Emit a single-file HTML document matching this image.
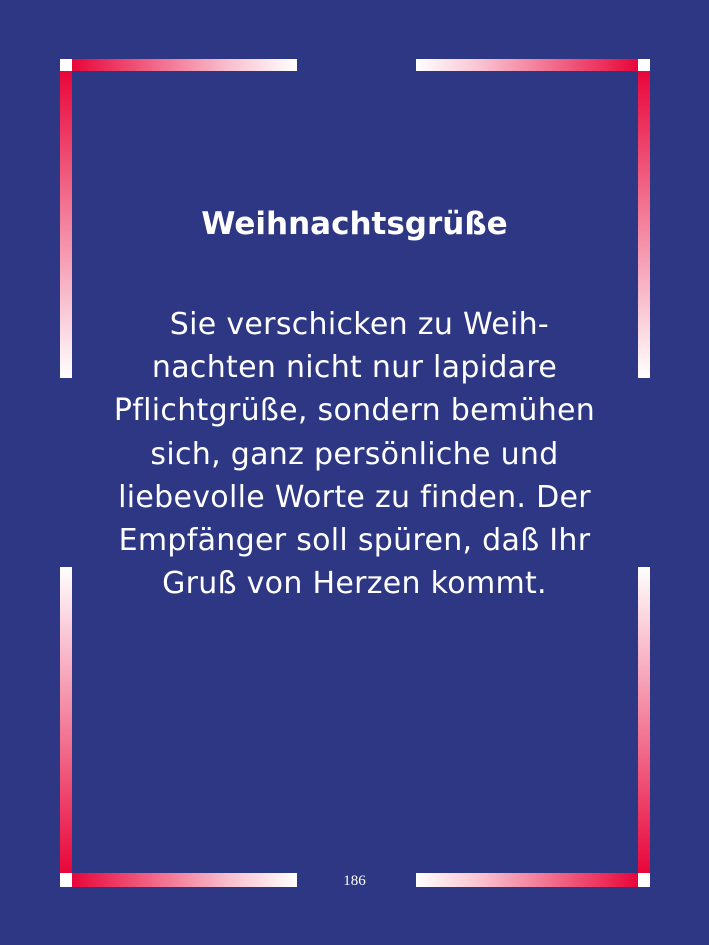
<!DOCTYPE html>
<html><head><meta charset="utf-8"><style>
html,body{margin:0;padding:0}
body{width:709px;height:945px;background:#2e3784;position:relative;overflow:hidden;font-family:"DejaVu Sans","Liberation Sans",sans-serif;color:#fff}
.b{position:absolute}
.h1{background:linear-gradient(to right,#e8063a,#f9c0cf 70%,#fff)}
.h2{background:linear-gradient(to left,#e8063a,#f9c0cf 70%,#fff)}
.vt{background:linear-gradient(to bottom,#e8063a,#f9c0cf 75%,#fff)}
.vb{background:linear-gradient(to top,#e8063a,#f9c0cf 75%,#fff)}
.w{background:#fff}
.t{position:absolute;left:0;width:709px;text-align:center;white-space:nowrap}
</style></head><body>
<div class="b h1" style="left:72px;top:59px;width:225px;height:12px"></div>
<div class="b w" style="left:60px;top:59px;width:12px;height:12px"></div>
<div class="b vt" style="left:60px;top:71px;width:12px;height:307px"></div>
<div class="b h2" style="left:416px;top:59px;width:222px;height:12px"></div>
<div class="b w" style="left:638px;top:59px;width:12px;height:12px"></div>
<div class="b vt" style="left:638px;top:71px;width:12px;height:307px"></div>
<div class="b vb" style="left:60px;top:567px;width:12px;height:306px"></div>
<div class="b w" style="left:60px;top:873px;width:12px;height:14px"></div>
<div class="b h1" style="left:72px;top:873px;width:225px;height:14px"></div>
<div class="b vb" style="left:638px;top:567px;width:12px;height:306px"></div>
<div class="b w" style="left:638px;top:873px;width:12px;height:14px"></div>
<div class="b h2" style="left:416px;top:873px;width:222px;height:14px"></div>
<div class="t" style="top:204px;font-size:31px;font-weight:bold;line-height:40px">Weihnachtsgrüße</div>
<div class="t" style="top:303px;font-size:30px;letter-spacing:0.3px;line-height:43.2px">&nbsp;Sie verschicken zu Weih-<br>nachten nicht nur lapidare<br>Pflichtgrüße, sondern bemühen<br>sich, ganz persönliche und<br>liebevolle Worte zu finden. Der<br>Empfänger soll spüren, daß Ihr<br>Gruß von Herzen kommt.</div>
<div class="t" style="top:871px;font-size:15px;line-height:20px;font-family:'Liberation Serif',serif">186</div>
</body></html>
